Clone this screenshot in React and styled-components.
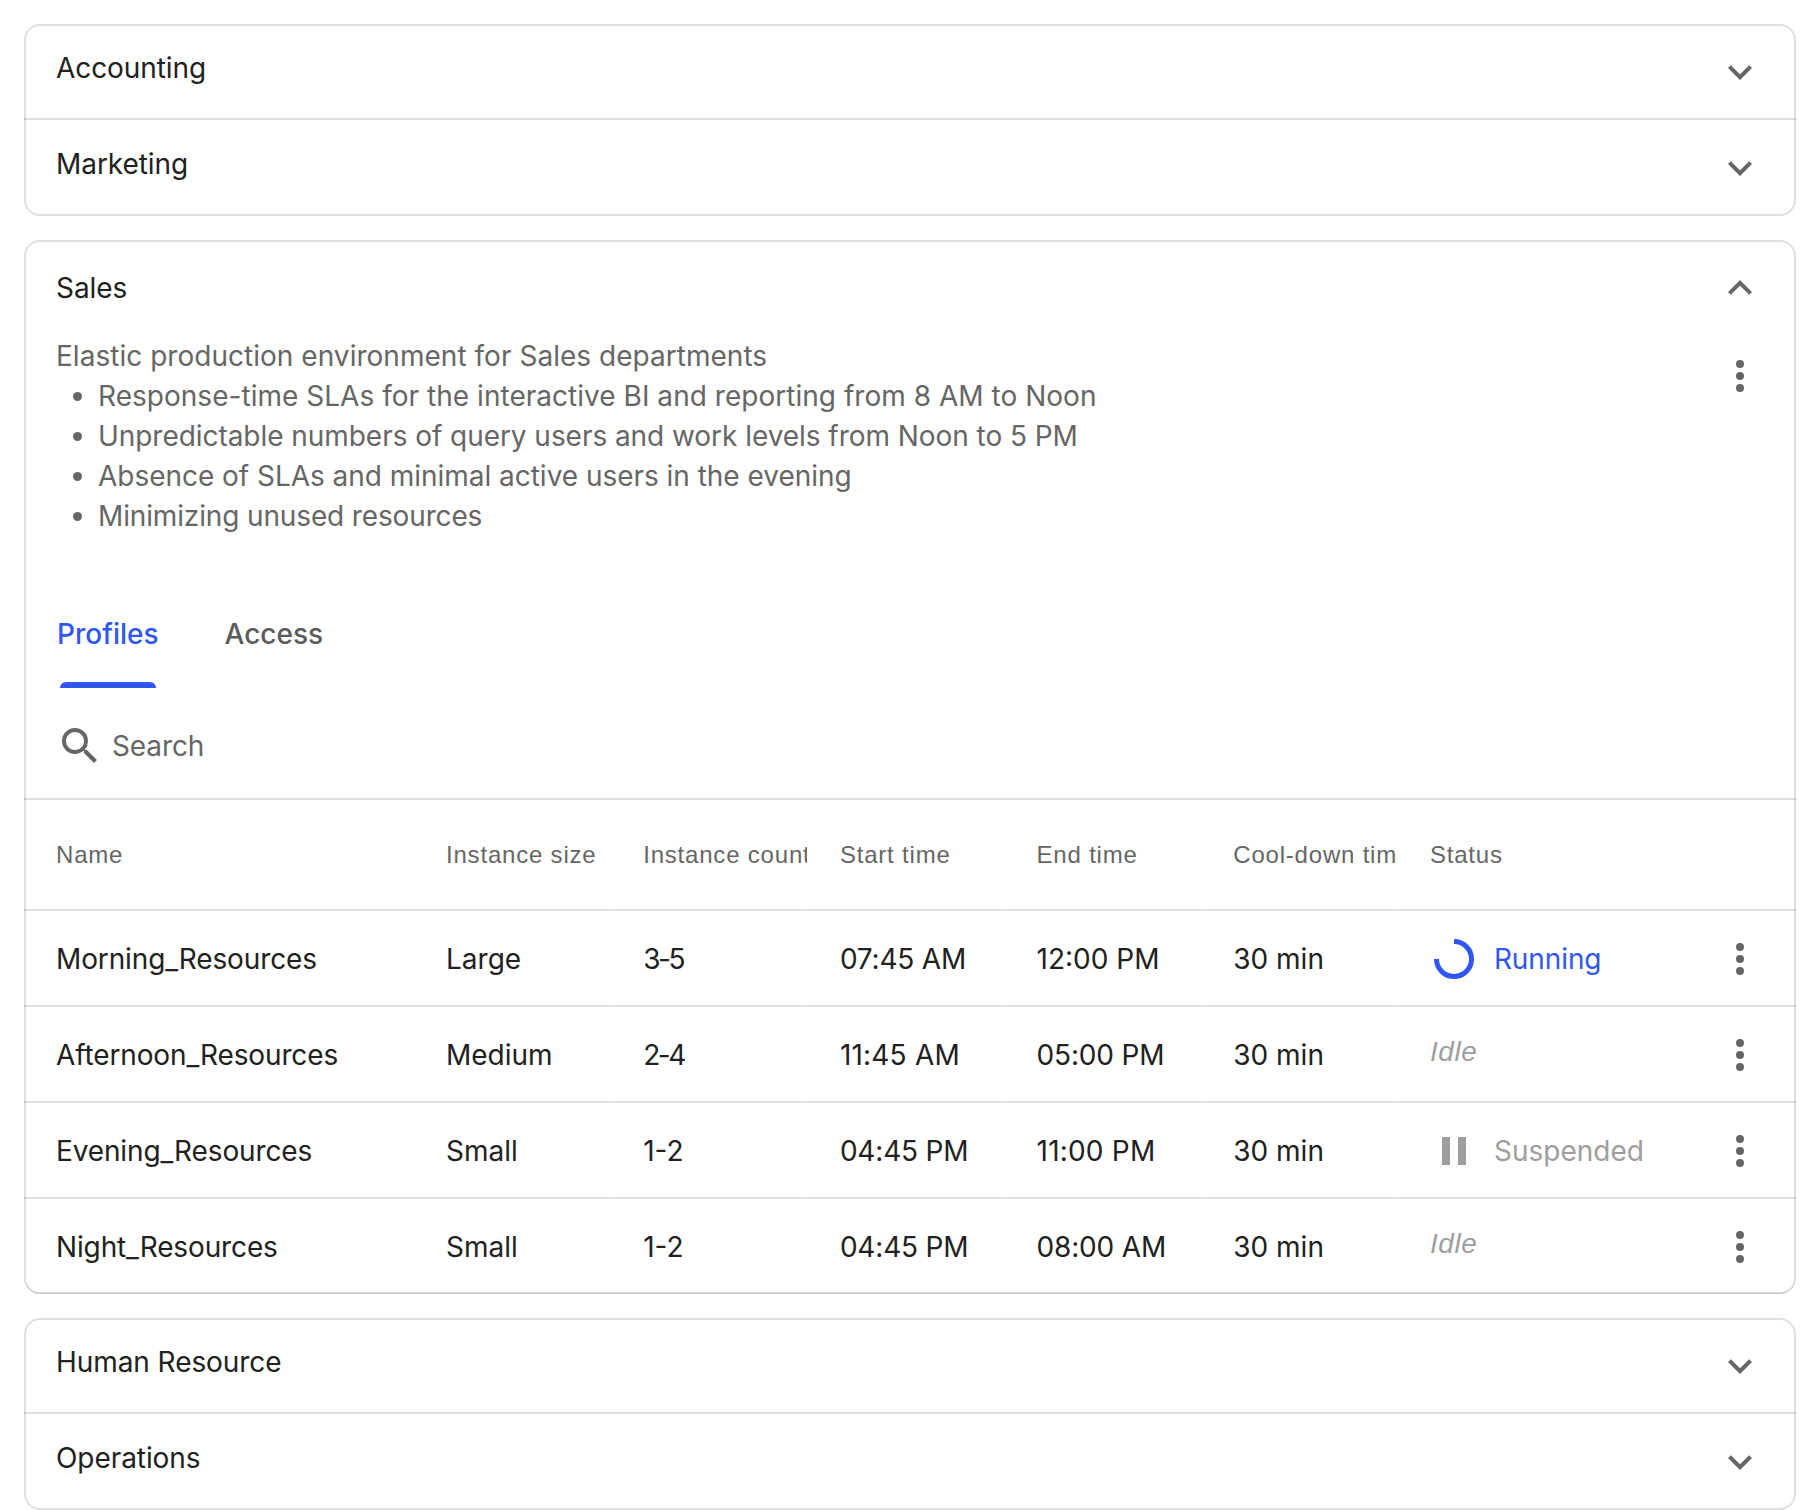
import React from "react";
import styled, { createGlobalStyle } from "styled-components";

const Global = createGlobalStyle`
  *, *::before, *::after { box-sizing: border-box; }
  body { margin: 0; background: #fff; }
`;

const line = "rgba(0, 0, 0, 0.12)";
const sans = `Inter, "Liberation Sans", sans-serif`;

const Page = styled.main`
  display: flex;
  flex-direction: column;
  gap: 24px;
  height: 1510px;
  padding: 24px 24px 0;
  font-family: ${sans};
  font-size: 28px;
  line-height: 40px;
  letter-spacing: 0.03px;
  color: #212121;
`;

const Card = styled.section`
  border: 2px solid ${line};
  border-radius: 16px;
  height: ${(p) => p.$height}px;
`;

const Header = styled.header`
  display: flex;
  justify-content: space-between;
  align-items: flex-start;
  height: 94px;
  padding: ${(p) => p.$top}px 30px 0;
  ${(p) => p.$divided && `border-bottom: 2px solid ${line}; margin: 0 -2px; padding-left: 32px; padding-right: 32px;`}
`;

const Title = styled.h2`
  margin: ${(p) => p.$top || 0}px 0 0;
  font: inherit;
  letter-spacing: -0.07px;
`;

const IconButton = styled.button`
  display: flex;
  flex: none;
  margin: ${(p) => p.$top || 0}px 0 0;
  padding: 0;
  border: 0;
  background: none;
  color: #666;
`;

const Summary = styled.div`
  display: flex;
  justify-content: space-between;
  align-items: flex-start;
  height: 266px;
  padding: 0 30px;
  color: #666;
`;

const Paragraph = styled.p`
  margin: 0;
`;

const Bullets = styled.ul`
  margin: 0;
  padding-left: 42px;
`;

const Bullet = styled.li`
  letter-spacing: ${(p) => p.$tracking}px;
`;

const Tabs = styled.nav`
  display: flex;
  gap: 66px;
  height: 86px;
  padding: 0 31px;
`;

const Tab = styled.a`
  display: flex;
  flex-direction: column;
  justify-content: space-between;
  align-items: center;
  padding-top: 12px;
  font-weight: 500;
  letter-spacing: 0;
  color: ${(p) => (p.$active ? "#3056f5" : "#5c5c5f")};
`;

const Indicator = styled.span`
  width: 96px;
  height: 6px;
  border-radius: 6px 6px 0 0;
  background: #3056f5;
`;

const SearchRow = styled.div`
  display: flex;
  align-items: center;
  gap: 8px;
  height: 112px;
  margin: 0 -2px;
  padding: 6px 32px 0;
  border-bottom: 2px solid ${line};
  letter-spacing: -0.1px;
  color: #666;
`;

const Row = styled.div`
  display: grid;
  grid-template-columns: 390px 196.4px repeat(4, 196.7px) 1fr 80px;
  height: ${(p) => p.$height}px;
  margin: 0 -2px;
  ${(p) => p.$last && `border-bottom: 1px solid ${line}; border-radius: 0 0 16px 16px;`}
`;

const Cell = styled.div`
  display: flex;
  align-items: center;
  gap: 16px;
  padding: ${(p) => p.$drop ?? 2}px 0 ${(p) => p.$lift ?? 0}px 32px;
  border-bottom: ${(p) => (p.$last ? 0 : 2)}px solid ${line};
  white-space: nowrap;
  overflow: hidden;
  letter-spacing: ${(p) => p.$tracking ?? 0}px;
  color: ${(p) => p.$color || "inherit"};

  &:nth-child(n + 3):nth-child(-n + 7) {
    border-left: 1px solid transparent;
    padding-left: 31.8px;
  }

  &:last-child {
    padding-left: 0;
  }
`;

const HeadCell = styled(Cell)`
  padding-top: 1px;
  font-family: "Liberation Sans", Arial, sans-serif;
  font-size: 24px;
  letter-spacing: 0.8px;
  color: #666;
`;

const Idle = styled.em`
  font-family: "Liberation Sans", Arial, sans-serif;
  letter-spacing: 0.6px;
`;

const Chevron = ({ up }) => (
  <svg width="48" height="48" viewBox="0 0 24 24" fill="currentColor">
    <path d={up ? "M12 8l-6 6 1.41 1.41L12 10.83l4.59 4.58L18 14z" : "M16.59 8.59L12 13.17 7.41 8.59 6 10l6 6 6-6z"} />
  </svg>
);

const Dots = () => (
  <svg width="48" height="48" viewBox="0 0 24 24" fill="currentColor">
    <circle cx="12" cy="6" r="2" />
    <circle cx="12" cy="12" r="2" />
    <circle cx="12" cy="18" r="2" />
  </svg>
);

const SearchIcon = () => (
  <svg width="48" height="48" viewBox="0 0 24 24" fill="currentColor">
    <path d="M15.5 14h-.79l-.28-.27A6.471 6.471 0 0 0 16 9.5 6.5 6.5 0 1 0 9.5 16c1.61 0 3.09-.59 4.23-1.57l.27.28v.79l5 4.99L20.49 19l-4.99-5zm-6 0C7.01 14 5 11.99 5 9.5S7.01 5 9.5 5 14 7.01 14 9.5 11.99 14 9.5 14z" />
  </svg>
);

const Spinner = () => (
  <svg width="48" height="48" viewBox="0 0 48 48" fill="none" stroke="currentColor" strokeWidth="5">
    <path d="M24 6.5A17.5 17.5 0 1 1 6.5 24" />
  </svg>
);

const Pause = () => (
  <svg width="48" height="48" viewBox="0 0 24 24" fill="currentColor">
    <path d="M6 5h4v14H6zM14 5h4v14h-4z" />
  </svg>
);

const columns = ["Name", "Instance size", "Instance count", "Start time", "End time", "Cool-down time", "Status", ""];

const goals = [
  ["Response-time SLAs for the interactive BI and reporting from 8 AM to Noon", 0.03],
  ["Unpredictable numbers of query users and work levels from Noon to 5 PM", -0.05],
  ["Absence of SLAs and minimal active users in the evening", -0.03],
  ["Minimizing unused resources", -0.14],
];

const trackingFor = (value, column) => {
  if (column === 0) return -0.13;
  if (column === 2) return value === "1-2" ? 0 : -2.4;
  if (value.startsWith("11:")) return 0.2;
  if (/^0.*M$/.test(value)) return -0.18;
  return 0;
};

const profiles = [
  ["Morning_Resources", "Large", "3-5", "07:45 AM", "12:00 PM", "30 min", "Running"],
  ["Afternoon_Resources", "Medium", "2-4", "11:45 AM", "05:00 PM", "30 min", "Idle"],
  ["Evening_Resources", "Small", "1-2", "04:45 PM", "11:00 PM", "30 min", "Suspended"],
  ["Night_Resources", "Small", "1-2", "04:45 PM", "08:00 AM", "30 min", "Idle"],
];

const Status = ({ value, last }) => {
  if (value === "Running") return <Cell $color="#3056f5" $tracking={-0.1} $last={last}><Spinner />Running</Cell>;
  if (value === "Suspended") return <Cell $color="#9e9e9e" $last={last}><Pause />Suspended</Cell>;
  return <Cell $color="#9e9e9e" $drop={0} $lift={4} $last={last}><Idle>Idle</Idle></Cell>;
};

const CollapsedGroup = ({ names }) => (
  <Card $height={192}>
    {names.map((name, i) => (
      <Header key={name} $top={i === 0 ? 22 : 24} $divided={i === 0}>
        <Title>{name}</Title>
        <IconButton><Chevron /></IconButton>
      </Header>
    ))}
  </Card>
);

export default function App() {
  return (
    <Page>
      <Global />
      <CollapsedGroup names={["Accounting", "Marketing"]} />
      <Card $height={1054}>
        <Header $top={22}>
          <Title $top={4}>Sales</Title>
          <IconButton><Chevron up /></IconButton>
        </Header>
        <Summary>
          <div>
            <Paragraph>Elastic production environment for Sales departments</Paragraph>
            <Bullets>
              {goals.map(([text, tracking]) => <Bullet key={text} $tracking={tracking}>{text}</Bullet>)}
            </Bullets>
          </div>
          <IconButton $top={16}><Dots /></IconButton>
        </Summary>
        <Tabs>
          <Tab $active>Profiles<Indicator /></Tab>
          <Tab>Access</Tab>
        </Tabs>
        <SearchRow><SearchIcon />Search</SearchRow>
        <Row $height={111}>
          {columns.map((c) => <HeadCell key={c}>{c}</HeadCell>)}
        </Row>
        {profiles.map((p, r) => {
          const last = r === profiles.length - 1;
          return (
            <Row key={p[0]} $height={last ? 95 : 96} $last={last}>
              {p.slice(0, 6).map((v, i) => <Cell key={i} $tracking={trackingFor(v, i)} $last={last}>{v}</Cell>)}
              <Status value={p[6]} last={last} />
              <Cell $last={last}><IconButton><Dots /></IconButton></Cell>
            </Row>
          );
        })}
      </Card>
      <CollapsedGroup names={["Human Resource", "Operations"]} />
    </Page>
  );
}
